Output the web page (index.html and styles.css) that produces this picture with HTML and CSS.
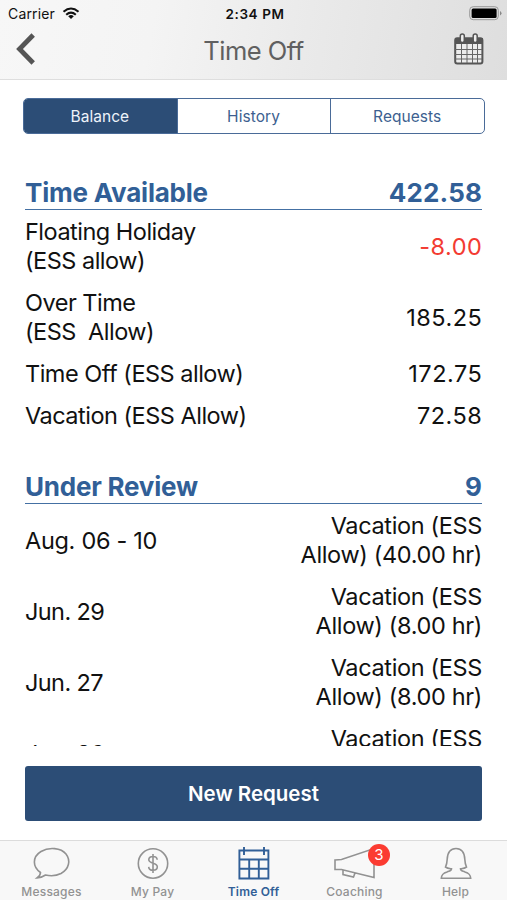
FILE: index.html
```html
<!DOCTYPE html>
<html lang="en">
<head>
<meta charset="utf-8">
<title>Time Off</title>
<link rel="stylesheet" href="styles.css">
</head>
<body>
<div class="app">
  <header class="header">
    <div class="status">
      <div class="carrier"><span>Carrier</span>
        <svg width="18" height="13" viewBox="0 0 17 13" fill="none" stroke="#111" stroke-width="2.1"><path d="M1 4.7Q8.5-1.7 16 4.7"/><path d="M3.7 7.7Q8.5 3.6 13.3 7.7"/><path d="M8.5 12L5.7 9.2Q8.500 7 11.300 9.200Z" fill="#111" stroke="none"/></svg>
      </div>
      <div class="clock">2:34 PM</div>
      <svg class="battery" width="33" height="15" viewBox="0 0 33 15"><rect x=".7" y=".7" width="28.600" height="13" rx="3.500" fill="none" stroke="#999" stroke-width="1"/><rect x="2.600" y="2.500" width="25" height="9.500" rx="1.500" fill="#000"/><path d="M31 5v4.500q1.500-.7 1.500-2.250T31 5z" fill="#888"/></svg>
    </div>
    <div class="nav">
      <svg class="back" width="21" height="32" viewBox="0 0 21 32" fill="none" stroke="#555" stroke-width="4.800"><path d="M18.200 2L4.500 16L18.200 30"/></svg>
      <h1>Time Off</h1>
      <svg class="calendar" width="30" height="32" viewBox="0 0 30 32"><rect x="1.200" y="5.200" width="27.200" height="25.300" rx="2" fill="#ececec" stroke="#555" stroke-width="2"/><path d="M1 5h28v6H1z" fill="#555"/><path d="M1 16.500h27M1 21.500h27M1 26h27M7.500 11v19M13 11v19M18.500 11v19M23.500 11v19" stroke="#666" stroke-width="1"/><rect x="6.300" y="1" width="4" height="8.500" rx="2" fill="#eee" stroke="#555" stroke-width="1.500"/><rect x="19.200" y="1" width="4" height="8.500" rx="2" fill="#eee" stroke="#555" stroke-width="1.500"/></svg>
    </div>
  </header>
  <div class="tabs"><div class="tab active">Balance</div><div class="tab">History</div><div class="tab">Requests</div></div>
  <main class="content">
    <section>
      <h2><span>Time Available</span><span class="total">422.58</span></h2>
      <div class="row"><span>Floating Holiday<br>(ESS allow)</span><span class="num negative">-8.00</span></div>
      <div class="row"><span class="pre">Over Time<br>(ESS  Allow)</span><span class="num">185.25</span></div>
      <div class="row"><span>Time Off (ESS allow)</span><span class="num">172.75</span></div>
      <div class="row"><span>Vacation (ESS Allow)</span><span class="num">72.58</span></div>
    </section>
    <section class="review">
      <h2><span>Under Review</span><span class="total">9</span></h2>
      <div class="row"><span class="range">Aug. 06 - 10</span><span class="detail">Vacation (ESS<br>Allow) (40.00 hr)</span></div>
      <div class="row"><span class="date">Jun. 29</span><span class="detail">Vacation (ESS<br>Allow) (8.00 hr)</span></div>
      <div class="row"><span class="date">Jun. 27</span><span class="detail">Vacation (ESS<br>Allow) (8.00 hr)</span></div>
      <div class="row"><span class="date">Jun. 26</span><span class="detail">Vacation (ESS<br>Allow) (8.00 hr)</span></div>
    </section>
  </main>
  <button class="request">New Request</button>
  <nav class="bottom">
    <div class="item"><svg width="38" height="34" viewBox="0 0 38 34"><path d="M7.500 25.500C-.5 20-1 10 8 4.500C16-.3 28 .7 33 7C38 13.500 36 22 28 26.500C23 29 17 29 12.500 28C9.500 30 7 31 4 31C6 29.500 7.500 28 7.500 25.500Z"/></svg><span>Messages</span></div>
    <div class="item pay"><svg width="34" height="34" viewBox="0 0 34 34"><circle cx="17" cy="16.500" r="14.700"/><path d="M21.200 12.700C21 10.300 19 9.500 17 9.500C14.500 9.500 12.800 11 12.800 12.800C12.800 17 21.300 15.300 21.300 19.800C21.300 22 19.500 23.300 17 23.300C14.700 23.300 12.800 22.100 12.700 19.900M17 7v19"/></svg><span>My Pay</span></div>
    <div class="item on"><svg width="34" height="34" viewBox="0 0 34 34"><path d="M2.400 3.500h29v28h-29zM2.400 12.500h29M2.400 21.800h29M12.200 12.500v19M21.800 12.500v19M7 0v8M27 0v8"/></svg><span>Time Off</span></div>
    <div class="item coach"><svg width="44" height="34" viewBox="0 0 44 34"><path d="M2 13L8.500 12.500L41 1.500V30.500L8.500 22.500H2zM10 23V27.500L20.500 30L22 26"/></svg><b class="badge">3</b><span>Coaching</span></div>
    <div class="item help"><svg width="34" height="34" viewBox="0 0 34 34"><path d="M17 1.500C10.500 1.500 8.500 6.300 8.200 12.300C8 16.500 7.500 18 6.500 20C8.500 21.500 10 21.500 12.500 21.800C12.500 24 11 23.800 8 25C4 26.200 2.500 27.500 2.300 31.300H31.700C31.500 27.500 30 26.200 26 25C23 23.800 21.500 24 21.500 21.800C24 21.500 25.500 21.500 27.500 20C26.500 18 26 16.500 25.800 12.300C25.500 6.300 23.500 1.500 17 1.500Z"/></svg><span>Help</span></div>
  </nav>
</div>
</body>
</html>
```
FILE: styles.css
```css
* { box-sizing: border-box; }
body { margin: 0; background: #fff; font-family: Inter, "Liberation Sans", sans-serif; color: #111; }
.app { width: 507px; height: 900px; display: flex; flex-direction: column; overflow: hidden; }
.header { flex: none; height: 80px; background: linear-gradient(100deg, #f7f7f7 0%, #f4f4f4 30%, #eaeaea 60%, #dedede 100%); border-bottom: 1px solid #dedede; }
.status { height: 27px; display: grid; grid-template-columns: 1fr auto 1fr; align-items: center; padding: 0 5px 0 8px; }
.carrier { display: flex; align-items: center; gap: 7px; font-size: 14px; letter-spacing: .15px; }
.clock { font-size: 13.500px; font-weight: 600; letter-spacing: .6px; }
.battery { justify-self: end; }
.nav { height: 44px; display: grid; grid-template-columns: 1fr auto 1fr; align-items: center; padding: 0 23px 0 15px; }
.nav h1 { margin: 2px 0 0 8px; font-weight: 400; font-size: 25.500px; letter-spacing: -.5px; color: #606060; }
.calendar { justify-self: end; }
.tabs { flex: none; display: flex; width: 462px; height: 36px; margin: 18px 0 0 23px; border: 1.500px solid #4a6b98; border-radius: 5px; overflow: hidden; }
.tab { flex: 1; display: flex; align-items: center; justify-content: center; padding-right: 1px; font-size: 15.500px; letter-spacing: .05px; color: #3d5f90; border-left: 1px solid #4a6b98; }
.tab.active { background: #2c4d76; color: #eef3fa; border-left: 0; }
.content { flex: none; height: 612px; overflow: hidden; padding: 42px 25px 0; }
h2 { display: flex; justify-content: space-between; align-items: center; height: 34px; margin: 0; border-bottom: 1px solid #4470a3; font-size: 26px; font-weight: 700; letter-spacing: -.22px; color: #315f97; }
.total { letter-spacing: .15px; }
.row { display: flex; justify-content: space-between; align-items: center; padding: 7px 0 6px; font-size: 23.500px; line-height: 29px; letter-spacing: -.5px; }
.num { letter-spacing: .5px; margin-right: -.3px; }
.range { letter-spacing: -.3px; }
.date { letter-spacing: -.6px; }
.pre { white-space: pre; }
.detail { text-align: right; letter-spacing: -.35px; }
.negative { color: #f33b32; }
.review { margin-top: 34px; }
.request { flex: none; width: 457px; height: 55px; margin: 20px 0 0 25px; border: 0; border-radius: 3px; background: #2c4d76; color: #fff; font: 600 20.500px Inter, sans-serif; letter-spacing: 0; }
.bottom { margin-top: 19px; flex: 1; background: #f8f8f8; border-top: 1px solid #dcdcdc; display: flex; padding-left: 1px; }
.item { position: relative; width: 101px; flex: none; padding-top: 6px; display: flex; flex-direction: column; align-items: center; color: #929292; font-size: 12px; font-weight: 500; letter-spacing: .2px; }
.item svg { fill: none; stroke: currentColor; stroke-width: 1.600; flex: none; }
.item span { line-height: 16px; margin-top: 3px; }
.item.on { color: #315f97; font-weight: 600; }
.item.on svg { stroke-width: 1.900; }
.badge { position: absolute; left: 64px; top: 3px; width: 22px; height: 22px; border-radius: 50%; background: #fb3b31; color: #fff; font-size: 15px; font-weight: 400; line-height: 22px; text-align: center; letter-spacing: 0; }
```
